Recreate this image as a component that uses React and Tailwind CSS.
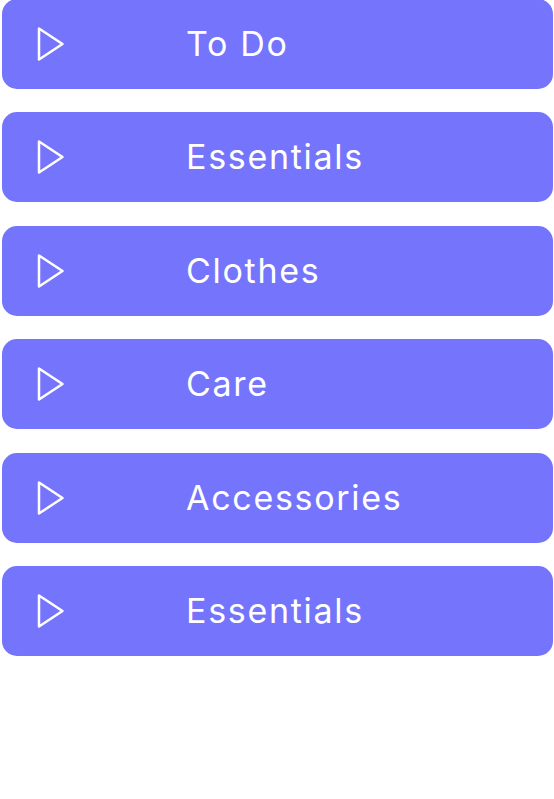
const items = ['To Do', 'Essentials', 'Clothes', 'Care', 'Accessories', 'Essentials']

function PlayOutline() {
  return (
    <svg width="28" height="36" viewBox="0 0 28 36" fill="none" className="shrink-0">
      <path
        d="M2 2.5 L2 33.5 L25.5 18 Z"
        stroke="white"
        strokeWidth="2.5"
        strokeLinejoin="round"
      />
    </svg>
  )
}

export default function App() {
  return (
    <div className="min-h-screen bg-white font-['Inter',sans-serif] overflow-hidden">
      <div className="flex flex-col gap-[23.5px] pl-[2px] pr-[1px] -mt-[1.5px]">
        {items.map((label, i) => (
          <div
            key={i}
            className="h-[90px] rounded-[15px] bg-[#7574fc] flex items-center pl-[35px]"
          >
            <PlayOutline />
            <span className="ml-[121px] text-white text-[34px] tracking-[0.05em] leading-none">
              {label}
            </span>
          </div>
        ))}
      </div>
    </div>
  )
}
